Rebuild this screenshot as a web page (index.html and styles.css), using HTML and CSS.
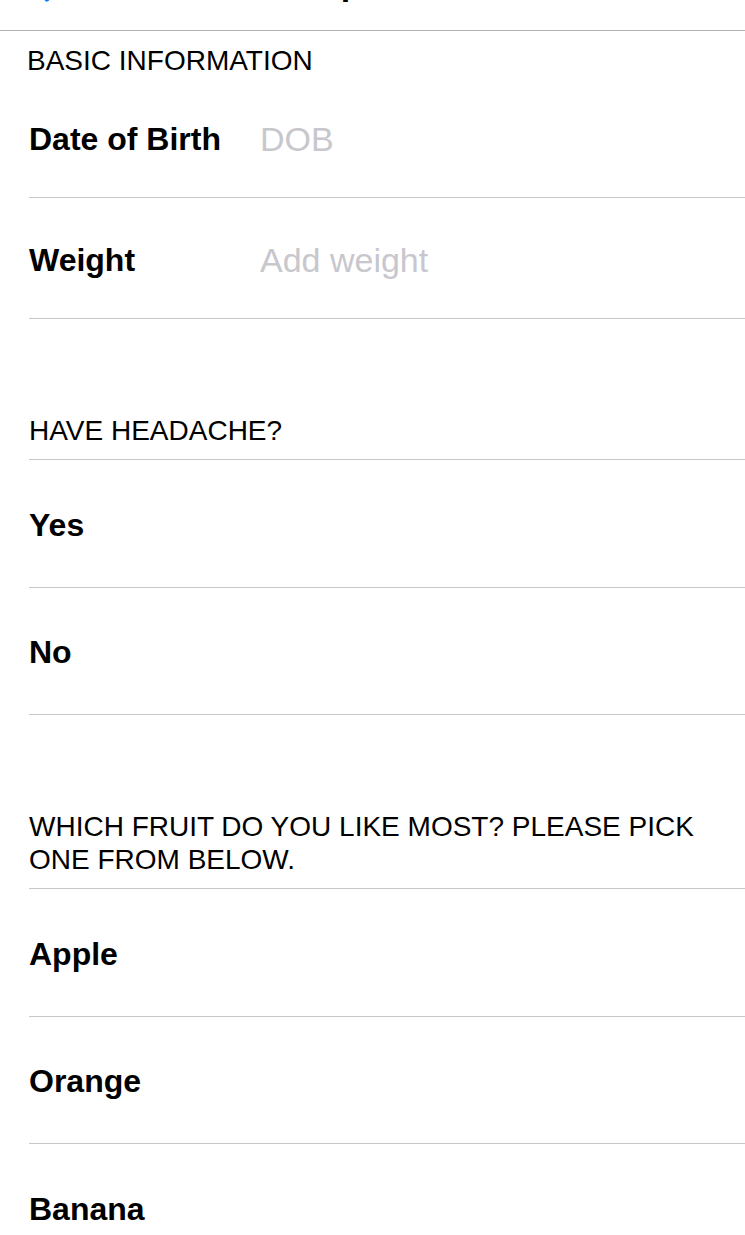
FILE: index.html
```html
<!DOCTYPE html>
<html lang="en">
<head>
<meta charset="utf-8">
<title>Options</title>
<link rel="stylesheet" href="styles.css">
</head>
<body>
<header class="navbar">
  <svg class="back-chevron" viewBox="0 0 26 44" aria-hidden="true">
    <path d="M22 3 L5 22 L22 41" fill="none" stroke="#007aff" stroke-width="5" stroke-linecap="round" stroke-linejoin="round"/>
  </svg>
  <span class="nav-title">Options</span>
  <span class="nav-spacer"></span>
</header>

<main class="form">
  <section class="group">
    <h2 class="group-header group-header--first">BASIC INFORMATION</h2>
    <div class="cell cell--field">
      <span class="cell-label cell-label--fixed">Date of Birth</span>
      <span class="cell-placeholder">DOB</span>
    </div>
    <div class="cell cell--field">
      <span class="cell-label cell-label--fixed">Weight</span>
      <span class="cell-placeholder">Add weight</span>
    </div>
  </section>

  <section class="group">
    <h2 class="group-header">HAVE HEADACHE?</h2>
    <div class="cell cell--choice"><span class="cell-label">Yes</span></div>
    <div class="cell cell--choice"><span class="cell-label">No</span></div>
  </section>

  <section class="group">
    <h2 class="group-header">WHICH FRUIT DO YOU LIKE MOST? PLEASE PICK ONE FROM BELOW.</h2>
    <div class="cell cell--choice"><span class="cell-label">Apple</span></div>
    <div class="cell cell--choice"><span class="cell-label">Orange</span></div>
    <div class="cell cell--choice"><span class="cell-label">Banana</span></div>
  </section>
</main>
</body>
</html>
```

FILE: styles.css
```css
* {
  box-sizing: border-box;
}

body {
  margin: 0;
  background: #ffffff;
  color: #000000;
  font-family: "Liberation Sans", Arial, Helvetica, sans-serif;
}

/* Navigation bar (scrolled mostly out of view) */
.navbar {
  height: 31px;
  border-bottom: 1px solid #b2b2b2;
  overflow: hidden;
  display: grid;
  grid-template-columns: 1fr auto 1fr;
  align-items: start;
}

.back-chevron {
  width: 26px;
  height: 44px;
  margin-top: -42px;
  margin-left: 25px;
  justify-self: start;
}

.nav-title {
  margin-top: -37px;
  padding-left: 12px;
  font-size: 34px;
  line-height: 40px;
  font-weight: 700;
}

/* Form */
.form {
  display: flex;
  flex-direction: column;
}

.group {
  display: flex;
  flex-direction: column;
  margin-left: 29px;
}

.group-header {
  margin: 0;
  padding: 95px 30px 12px 0;
  font-size: 28px;
  line-height: 33px;
  font-weight: 400;
  color: #000000;
  border-bottom: 1px solid #c8c7cc;
}

.group-header--first {
  padding-top: 13px;
  padding-bottom: 0;
  border-bottom: none;
  margin-left: -2px;
}

.cell {
  display: flex;
  align-items: center;
  padding-top: 3px;
  border-bottom: 1px solid #c8c7cc;
}

.cell--field {
  height: 121px;
}

.cell--choice {
  height: 127.5px;
}

.cell-label {
  font-size: 32px;
  line-height: 38px;
  font-weight: 700;
}

.cell-label--fixed {
  flex: none;
  width: 231px;
}

.cell-placeholder {
  font-size: 34px;
  line-height: 38px;
  color: #c7c7cd;
}
```
